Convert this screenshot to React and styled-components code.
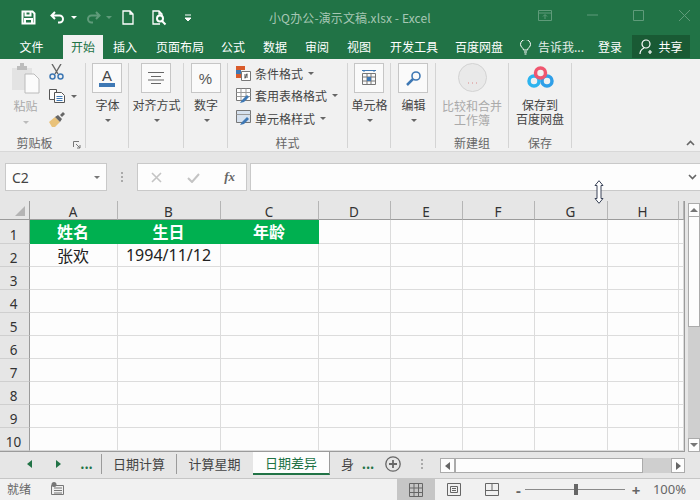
import React from 'react';
import styled, { createGlobalStyle } from 'styled-components';

const GREEN = '#217346';
const CJK = `"Noto Sans CJK SC", "Noto Sans", sans-serif`;

const GlobalStyle = createGlobalStyle`
  html, body { margin: 0; padding: 0; background: #e6e6e6; }
  * { box-sizing: border-box; }
`;

const Window = styled.div`
  position: relative;
  width: 700px;
  height: 500px;
  overflow: hidden;
  display: flex;
  flex-direction: column;
  font-family: ${CJK};
  background: #e6e6e6;
`;

/* title bar */
const TitleBar = styled.div`
  height: 35px;
  flex: none;
  display: flex;
  align-items: center;
  background: ${GREEN};
`;
const QuickBar = styled.div`
  width: 269px;
  flex: none;
  display: flex;
  align-items: center;
  height: 30px;
  padding-left: 21px;
`;
const QuickIcon = styled.svg`
  flex: none;
  margin-right: ${p => p.$gap || 0}px;
  fill: none;
  stroke: ${p => p.$dim ? '#5f9b7a' : '#fff'};
  stroke-width: ${p => p.$weight || 1.6};
`;
const Caret = styled.span`
  flex: none;
  width: 0;
  height: 0;
  border-left: ${p => p.$size || 3}px solid transparent;
  border-right: ${p => p.$size || 3}px solid transparent;
  border-top: ${p => p.$size || 3}px solid ${p => p.$color || '#666'};
  margin-top: ${p => p.$top || 0}px;
  margin-left: ${p => p.$left || 0}px;
  margin-right: ${p => p.$right || 0}px;
`;
const UpCaret = styled(Caret)`
  transform: rotate(180deg);
`;
const Title = styled.div`
  flex: 1;
  font-size: 12px;
  color: #a6c7b4;
  white-space: nowrap;
  margin-top: -1px;
  letter-spacing: 0.12px;
`;
const WindowControls = styled.div`
  width: 162px;
  flex: none;
  display: flex;
  align-items: center;
  justify-content: space-between;
  padding-right: 10px;
  margin-top: -5px;
`;

/* tab row */
const TabRow = styled.div`
  height: 24px;
  flex: none;
  display: flex;
  background: ${GREEN};
`;
const Tab = styled.div`
  flex: none;
  width: ${p => p.$w}px;
  display: flex;
  align-items: center;
  justify-content: center;
  font-size: 12px;
  line-height: 24px;
  white-space: nowrap;
  color: ${p => p.$active ? GREEN : '#fff'};
  background: ${p => p.$active ? '#f1f1f1' : 'transparent'};
`;
const TellTab = styled(Tab)`
  justify-content: flex-start;
  gap: 7px;
  padding-left: 9px;
  color: #e4eee8;
`;
const ShareButton = styled.div`
  flex: none;
  width: 58px;
  height: 23px;
  display: flex;
  align-items: center;
  justify-content: center;
  gap: 3px;
  font-size: 12px;
  color: #fff;
  background: #195a34;
`;

/* ribbon */
const Ribbon = styled.div`
  position: relative;
  height: 93px;
  flex: none;
  display: flex;
  padding-top: 4px;
  background: #f1f1f1;
  border-bottom: 1px solid #d8d8d8;
`;
const Group = styled.div`
  flex: none;
  width: ${p => p.$w}px;
  height: 85px;
  display: flex;
  flex-direction: column;
  border-right: 1px solid #d4d4d4;
`;
const GroupBody = styled.div`
  flex: 1;
  display: flex;
  flex-direction: ${p => p.$row ? 'row' : 'column'};
  align-items: ${p => p.$row ? 'flex-start' : 'center'};
  min-height: 0;
`;
const GroupLabel = styled.div`
  position: relative;
  height: 14px;
  margin-bottom: -2px;
  padding-right: ${p => p.$shift || 0}px;
  flex: none;
  font-size: 12px;
  line-height: 14px;
  color: #666;
  text-align: center;
`;
const BoxButton = styled.div`
  width: 30px;
  height: 30px;
  flex: none;
  display: flex;
  align-items: center;
  justify-content: center;
  font-family: "Liberation Sans", sans-serif;
  font-size: 15px;
  color: #555;
  background: #fafafa;
  border: 1px solid #c6c6c6;
`;
const CollapsedLabel = styled.div`
  margin: 3px 0 0 1px;
  font-size: 12px;
  line-height: 18px;
  color: #444;
  white-space: nowrap;
`;
const BigLabel = styled.div`
  margin-top: ${p => p.$top || 0}px;
  font-size: 12px;
  line-height: 14px;
  text-align: center;
  white-space: nowrap;
  color: ${p => p.$off ? '#aaa' : '#444'};
`;
const PasteLabel = styled(BigLabel)`
  line-height: 18px;
  margin-top: 3px;
`;
const PasteColumn = styled.div`
  width: 46px;
  flex: none;
  display: flex;
  flex-direction: column;
  align-items: center;
  padding-left: 5px;
`;
const ToolColumn = styled.div`
  display: flex;
  flex-direction: column;
  align-items: flex-start;
  padding: 1px 0 0 3px;
  gap: 9px;
`;
const ToolRow = styled.div`
  display: flex;
  align-items: center;
`;
const StyleList = styled.div`
  align-self: flex-start;
  display: flex;
  flex-direction: column;
  padding: 0 0 0 8px;
  gap: 2px;
`;
const StyleRow = styled.div`
  display: flex;
  align-items: center;
  height: 20.5px;
  font-size: 12px;
  color: #444;
  white-space: nowrap;
`;
const StyleName = styled.span`
  margin-left: 4px;
`;
const Launcher = styled.svg`
  position: absolute;
  right: 4px;
  top: 5px;
`;
const CollapseRibbon = styled.svg`
  position: absolute;
  right: 5px;
  bottom: 5px;
`;
const DisabledBadge = styled.svg`
  flex: none;
`;
const CloudLogo = styled.svg`
  flex: none;
  margin: 3px 0 8px;
`;

/* formula bar */
const FormulaBar = styled.div`
  height: 49px;
  flex: none;
  display: flex;
  align-items: flex-start;
  padding: 11px 0 0 5px;
`;
const NameBox = styled.div`
  width: 102px;
  height: 28px;
  flex: none;
  display: flex;
  align-items: center;
  justify-content: space-between;
  padding: 0 6px;
  font-family: "Noto Sans", sans-serif;
  font-size: 14px;
  color: #444;
  background: #fdfdfd;
  border: 1px solid #c9c9c9;
`;
const Grip = styled.div`
  width: 30px;
  height: 28px;
  flex: none;
  display: flex;
  align-items: center;
  justify-content: center;
`;
const FxBox = styled.div`
  width: 110px;
  height: 28px;
  flex: none;
  display: flex;
  align-items: center;
  justify-content: space-between;
  padding: 0 11px 0 13px;
  background: #fdfdfd;
  border: 1px solid #c9c9c9;
`;
const FxText = styled.i`
  font-family: "Liberation Serif", serif;
  font-size: 13px;
  font-weight: bold;
  color: #666;
`;
const FormulaInput = styled.div`
  flex: 1;
  height: 28px;
  margin-left: 3px;
  display: flex;
  align-items: center;
  justify-content: flex-end;
  padding-right: 3px;
  background: #fdfdfd;
  border: 1px solid #c9c9c9;
  border-right: none;
`;

/* sheet */
const SheetArea = styled.div`
  height: 251px;
  flex: none;
  display: flex;
`;
const Sheet = styled.div`
  width: 685px;
  flex: none;
  display: grid;
  grid-template-columns: 30px 88px 103px 98px 72px 72px 72px 73px 71px 5px;
  grid-template-rows: 19px 24px repeat(9, 23px);
  border-right: 1px solid #9b9b9b;
  border-bottom: 1px solid #9b9b9b;
  background: #fdfdfd;
`;
const Corner = styled.div`
  display: flex;
  align-items: flex-end;
  justify-content: flex-end;
  padding: 0 4px 3px 0;
  background: #e6e6e6;
  border-right: 1px solid #9b9b9b;
  border-bottom: 1px solid #9b9b9b;
`;
const ColHead = styled.div`
  display: flex;
  align-items: center;
  justify-content: center;
  font-family: "Noto Sans", sans-serif;
  font-size: 13.5px;
  line-height: 18px;
  padding: 4px 1px 0 0;
  color: #333;
  background: #e6e6e6;
  border-right: 1px solid #b5b5b5;
  border-bottom: 1px solid #9b9b9b;
`;
const RowHead = styled.div`
  display: flex;
  align-items: flex-end;
  justify-content: center;
  padding-right: 2px;
  font-family: "Noto Sans", sans-serif;
  font-size: 13.5px;
  line-height: 15px;
  color: #333;
  background: #e6e6e6;
  border-right: 1px solid #9b9b9b;
  border-bottom: 1px solid #cfcfcf;
`;
const Cell = styled.div`
  display: flex;
  align-items: center;
  justify-content: center;
  font-size: 16px;
  line-height: 22px;
  white-space: nowrap;
  padding: 0 1px 1px 0;
  color: ${p => p.$head ? '#fff' : '#222'};
  font-weight: ${p => p.$head ? 700 : 400};
  font-family: ${p => p.$num ? '"Noto Sans", sans-serif' : CJK};
  background: ${p => p.$head ? '#00b050' : 'transparent'};
  border-right: 1px solid ${p => p.$head ? '#00b050' : '#dcdcdc'};
  border-bottom: 1px solid ${p => p.$head ? '#00b050' : '#dcdcdc'};
`;
const VScroll = styled.div`
  flex: 1;
  margin: 2px 0 0 3px;
  display: flex;
  flex-direction: column;
  background: #cfcfcf;
  background-image: radial-gradient(#e2e2e2 0.6px, transparent 0.7px);
  background-size: 2px 2px;
`;
const ScrollButton = styled.div`
  flex: none;
  width: ${p => p.$w || 'auto'};
  height: ${p => p.$h || 'auto'};
  display: flex;
  align-items: center;
  justify-content: center;
  background: #fdfdfd;
  border: 1px solid #ababab;
`;
const VThumb = styled.div`
  height: 110px;
  flex: none;
  background: #fdfdfd;
  border: 1px solid #ababab;
  border-top: none;
`;
const Spacer = styled.div`
  flex: 1;
`;
const StatusGap = styled.div`
  flex: none;
  width: 14px;
`;

/* sheet tabs */
const TabsBar = styled.div`
  height: 27px;
  flex: none;
  display: flex;
  align-items: flex-start;
  background: #e6e6e6;
  border-bottom: 1px solid #c6c6c6;
`;
const NavButton = styled.div`
  width: ${p => p.$w}px;
  height: 23px;
  flex: none;
  display: flex;
  align-items: center;
  justify-content: center;
  padding-bottom: ${p => p.$lift || 0}px;
  padding-left: ${p => p.$inset || 0}px;
  padding-right: ${p => p.$outset || 0}px;
  font-size: 13px;
  font-weight: 700;
  color: ${GREEN};
`;
const SheetTab = styled.div`
  flex: none;
  width: ${p => p.$w}px;
  height: ${p => p.$active || p.$clip ? 23 : 20}px;
  display: flex;
  align-items: center;
  justify-content: ${p => p.$clip ? 'flex-start' : 'center'};
  overflow: hidden;
  font-size: 13px;
  color: ${p => p.$active ? GREEN : '#444'};
  background: ${p => p.$active ? '#fdfdfd' : 'transparent'};
  border-left: ${p => p.$first ? '1px solid #9b9b9b' : 'none'};
  border-right: 1px solid ${p => p.$active || !p.$last ? '#9b9b9b' : 'transparent'};
  border-bottom: ${p => p.$active ? `2px solid ${GREEN}` : 'none'};
  padding-left: ${p => p.$clip ? 11 : 0}px;
`;
const SheetTabGroup = styled.div`
  display: flex;
  height: 23px;
  align-items: center;
`;
const HScroll = styled.div`
  width: 245px;
  height: 15px;
  flex: none;
  margin: 6px 0 0 0;
  display: flex;
  background: #cfcfcf;
  background-image: radial-gradient(#e2e2e2 0.6px, transparent 0.7px);
  background-size: 2px 2px;
`;
const HThumb = styled.div`
  width: 188px;
  flex: none;
  background: #fdfdfd;
  border: 1px solid #ababab;
`;

/* status bar */
const StatusBar = styled.div`
  flex: 1;
  display: flex;
  align-items: stretch;
  background: #f1f1f1;
  padding-left: 7px;
  font-size: 12px;
  color: #666;
`;
const StatusText = styled.div`
  width: 44px;
  flex: none;
  line-height: 20px;
`;
const MacroIcon = styled.svg`
  flex: none;
  margin-top: 3px;
`;
const ViewButton = styled.div`
  flex: none;
  width: ${p => p.$w}px;
  display: flex;
  align-items: center;
  justify-content: center;
  background: ${p => p.$active ? '#c6c6c6' : 'transparent'};
`;
const Zoomer = styled.div`
  flex: none;
  display: flex;
  align-items: center;
  gap: 4px;
  width: 137px;
  margin-left: 5px;
`;
const ZoomTrack = styled.div`
  position: relative;
  width: 100px;
  height: 1px;
  margin-right: 3px;
  background: #8a8a8a;
`;
const ZoomKnob = styled.div`
  position: absolute;
  left: 49px;
  top: -5px;
  width: 4px;
  height: 11px;
  background: #666;
`;
const ZoomSign = styled.span`
  font-family: "Noto Sans", sans-serif;
  font-size: 15px;
  font-weight: 700;
  color: #666;
  line-height: 20px;
`;
const ZoomValue = styled.div`
  font-family: "Noto Sans", sans-serif;
  font-size: 13px;
  line-height: 20px;
  color: #666;
`;
const ResizeCursor = styled.svg`
  position: absolute;
  left: 594px;
  top: 180px;
`;

const tabs = [
  ['文件', 63], ['开始', 40, true], ['插入', 44], ['页面布局', 66], ['公式', 40], ['数据', 44],
  ['审阅', 40], ['视图', 44], ['开发工具', 66], ['百度网盘', 64],
];
const columns = [['A', 88], ['B', 103], ['C', 98], ['D', 72], ['E', 72], ['F', 72], ['G', 73], ['H', 71]];
const rows = [1, 2, 3, 4, 5, 6, 7, 8, 9, 10];

const Row = ({ r }) => {
  const values = {
    1: ['姓名', '生日', '年龄'],
    2: ['张欢', '1994/11/12', ''],
  }[r] || [];
  return (
    <>
      <RowHead>{r}</RowHead>
      {columns.map(([c], i) => (
        <Cell key={c} $head={r === 1 && i < 3} $num={r === 2 && i === 1}>{values[i]}</Cell>
      ))}
      <Cell />
    </>
  );
};

const TableIcon = ({ accent }) => (
  <svg width="15" height="16" viewBox="0 0 15 16">
    <path d="M.5.5h14v12H.5z" fill={accent ? '#d6e1ee' : '#fff'} stroke="#777" />
    {!accent && <path d="M.5 4.5h14M.5 8.5h14M5 .5v12M10 .5v12" stroke="#999" />}
    {accent && <path d="M.5 4.5h14" stroke="#999" />}
    <path d="M4 15l2-3 5-5 2 2-5 5z" fill="#3e78b4" />
  </svg>
);

const GripDots = () => (
  <svg width="2" height="10" viewBox="0 0 2 10" fill="#aaa"><path d="M0 0h2v2H0zM0 4h2v2H0zM0 8h2v2H0z" /></svg>
);

export default function App() {
  return (
    <Window>
      <GlobalStyle />
      <TitleBar>
        <QuickBar>
          <QuickIcon width="15" height="15" viewBox="0 0 15 15" $gap={14} $weight={2}>
            <path d="M1.5 1.5h10l2 2v10h-12z" />
            <path d="M4.5 2v3.5h5V2M4 13.5V9h7v4.5" />
          </QuickIcon>
          <QuickIcon width="15" height="13" viewBox="0 0 15 13" $weight={2}>
            <path d="M5 1L1.5 4.5 5 8M2 4.5h7.5a3.5 3.5 0 0 1 0 7H8" />
          </QuickIcon>
          <Caret $color="#fff" $left={6} $right={9} />
          <QuickIcon width="15" height="13" viewBox="0 0 15 13" $dim $weight={2}>
            <path d="M10 1l3.5 3.5L10 8M13 4.5H5.5a3.5 3.5 0 0 0 0 7H7" />
          </QuickIcon>
          <Caret $color="#5f9b7a" $left={5} $right={10} />
          <QuickIcon width="12" height="15" viewBox="0 0 12 15" $gap={18} $weight={1.3}>
            <path d="M1 1h7l3 3v10H1zM8 1v3h3" />
          </QuickIcon>
          <QuickIcon width="15" height="16" viewBox="0 0 15 16" $gap={18} $weight={1.3}>
            <path d="M10 6V4L7 1H1v13h7M7 1v3h3" />
            <circle cx="8" cy="8.5" r="3" strokeWidth="2" />
            <path d="M10 11l3.5 3.5" strokeWidth="2" />
          </QuickIcon>
          <svg width="6" height="8" viewBox="0 0 6 8"><path d="M0 1h6M0 4l3 3 3-3z" stroke="#fff" fill="#fff" /></svg>
        </QuickBar>
        <Title>小Q办公-演示文稿.xlsx - Excel</Title>
        <WindowControls>
          <QuickIcon width="14" height="11" viewBox="0 0 14 11" $dim $weight={1}>
            <path d="M.5.5h13v10H.5zM.5 3h13M7 9V5M5 6.5l2-2 2 2" />
          </QuickIcon>
          <QuickIcon width="11" height="2" viewBox="0 0 11 2" $dim $weight={1}><path d="M0 1h11" /></QuickIcon>
          <QuickIcon width="11" height="11" viewBox="0 0 11 11" $dim $weight={1}><path d="M.5.5h10v10H.5z" /></QuickIcon>
          <QuickIcon width="11" height="11" viewBox="0 0 11 11" $dim $weight={1}><path d="M0 0l11 11M11 0L0 11" /></QuickIcon>
        </WindowControls>
      </TitleBar>

      <TabRow>
        {tabs.map(([name, w, active]) => <Tab key={name} $w={w} $active={active}>{name}</Tab>)}
        <TellTab $w={77}>
          <svg width="11" height="15" viewBox="0 0 11 15" fill="none" stroke="#fff">
            <path d="M3.5 10c0-2-3-3-3-5.5a5 5 0 0 1 10 0c0 2.5-3 3.500-3 5.500zM4 12h3M4.500 14h2" />
          </svg>
          告诉我...
        </TellTab>
        <Tab $w={44}>登录</Tab>
        <ShareButton>
          <svg width="16" height="16" viewBox="0 0 16 16" fill="none" stroke="#fff" strokeWidth="1.2">
            <circle cx="7" cy="5" r="4" />
            <path d="M1 15c0-3 2-5 4-6M11 11v4M9 13h4" />
          </svg>
          共享
        </ShareButton>
      </TabRow>

      <Ribbon>
        <Group $w={86}>
          <GroupBody $row>
            <PasteColumn>
              <svg width="29" height="31" viewBox="0 0 29 31">
                <path d="M1 5h20v22H1z" fill="#e3e3e3" />
                <path d="M6 3h10v4H6zM9 0h4v3H9z" fill="#bdbdbd" />
                <path d="M14 11h9l5 5v14H14z" fill="#fbfbfb" stroke="#bbb" />
              </svg>
              <PasteLabel $off>粘贴</PasteLabel>
              <Caret $color="#bbb" $top={6} />
            </PasteColumn>
            <ToolColumn>
              <svg width="15" height="16" viewBox="0 0 15 16" fill="none">
                <path d="M3 0l6 10M12 0L6 10" stroke="#666" strokeWidth="1.4" />
                <circle cx="3.500" cy="12.500" r="2.500" stroke="#3e78b4" strokeWidth="1.500" />
                <circle cx="11.500" cy="12.500" r="2.500" stroke="#3e78b4" strokeWidth="1.500" />
              </svg>
              <ToolRow>
                <svg width="16" height="14" viewBox="0 0 16 14" fill="#fdfdfd" stroke="#555">
                  <path d="M.5.500h7v10h-7z" />
                  <path d="M5.500 3.500h7l3 3v7h-10z" />
                  <path d="M7.500 7.500h6M7.500 9.500h6M7.500 11.500h6" stroke="#3e78b4" />
                </svg>
                <Caret $left={6} />
              </ToolRow>
              <svg width="16" height="15" viewBox="0 0 16 15">
                <path d="M0 10l6-5 5 5-5 5H3z" fill="#e9c27a" />
                <path d="M6 5l3-2 4 4-2 3z" fill="#666" />
                <path d="M11 3l3-3 2 2-3 3z" fill="#666" />
              </svg>
            </ToolColumn>
          </GroupBody>
          <GroupLabel $shift={16}>
            剪贴板
            <Launcher width="8" height="8" viewBox="0 0 8 8" fill="none" stroke="#777">
              <path d="M.5 6V.5H6M3 3l4 4M7 4v3H4" />
            </Launcher>
          </GroupLabel>
        </Group>

        <Group $w={43}>
          <GroupBody>
            <BoxButton>
              <svg width="16" height="20" viewBox="0 0 16 20">
                <text x="8" y="13" textAnchor="middle" fontFamily="Liberation Sans" fontSize="15" fill="#444">A</text>
                <path d="M0 15h16v4H0z" fill="#3e78b4" />
              </svg>
            </BoxButton>
            <CollapsedLabel>字体</CollapsedLabel>
            <Caret $top={5} $left={2} />
          </GroupBody>
          <GroupLabel />
        </Group>

        <Group $w={55}>
          <GroupBody>
            <BoxButton>
              <svg width="16" height="12" viewBox="0 0 16 12" stroke="#666">
                <path d="M0 .5h16M3 4.500h10M0 8h16M3 11.500h10" />
              </svg>
            </BoxButton>
            <CollapsedLabel>对齐方式</CollapsedLabel>
            <Caret $top={5} $left={2} />
          </GroupBody>
          <GroupLabel />
        </Group>

        <Group $w={44}>
          <GroupBody>
            <BoxButton>%</BoxButton>
            <CollapsedLabel>数字</CollapsedLabel>
            <Caret $top={5} $left={2} />
          </GroupBody>
          <GroupLabel />
        </Group>

        <Group $w={120}>
          <GroupBody>
            <StyleList>
              <StyleRow>
                <svg width="15" height="15" viewBox="0 0 15 15">
                  <path d="M0 0h9v4H0z" fill="#d95b2b" />
                  <path d="M0 4h5v4H0z" fill="#3e78b4" />
                  <path d="M0 8h5v4H0z" fill="#d95b2b" />
                  <path d="M5.500 5.500h9v9h-9z" fill="#fff" stroke="#777" />
                  <path d="M8 9h4M8 11h4M11 7.500l-2 5" stroke="#555" fill="none" />
                </svg>
                <StyleName>条件格式</StyleName>
                <Caret $left={5} />
              </StyleRow>
              <StyleRow>
                <TableIcon />
                <StyleName>套用表格格式</StyleName>
                <Caret $left={5} />
              </StyleRow>
              <StyleRow>
                <TableIcon accent />
                <StyleName>单元格样式</StyleName>
                <Caret $left={5} />
              </StyleRow>
            </StyleList>
          </GroupBody>
          <GroupLabel>样式</GroupLabel>
        </Group>

        <Group $w={43}>
          <GroupBody>
            <BoxButton>
              <svg width="16" height="16" viewBox="0 0 16 16" fill="none" stroke="#777">
                <path d="M1 .5h14M3 0v2M13 0v2" stroke="#3e78b4" />
                <path d="M1.500 3.500h13v11h-13zM1.500 7h13M1.500 11h13M6 3.500v11M10 3.500v11" />
                <path d="M6 7h4v4H6z" fill="#3e78b4" stroke="none" />
              </svg>
            </BoxButton>
            <CollapsedLabel>单元格</CollapsedLabel>
            <Caret $top={5} $left={2} />
          </GroupBody>
          <GroupLabel />
        </Group>

        <Group $w={45}>
          <GroupBody>
            <BoxButton>
              <svg width="15" height="15" viewBox="0 0 15 15" fill="none" stroke="#3e78b4">
                <circle cx="10" cy="5" r="4" strokeWidth="1.600" />
                <path d="M7 8l-6 6" strokeWidth="2.500" />
              </svg>
            </BoxButton>
            <CollapsedLabel>编辑</CollapsedLabel>
            <Caret $top={5} $left={2} />
          </GroupBody>
          <GroupLabel />
        </Group>

        <Group $w={73}>
          <GroupBody>
            <DisabledBadge width="29" height="29" viewBox="0 0 29 29">
              <circle cx="14.500" cy="14.500" r="14" fill="#e9e9e9" stroke="#d2d2d2" />
              <path d="M10 20h1M14 20h1M18 20h1" stroke="#d88" />
            </DisabledBadge>
            <BigLabel $off $top={7}>比较和合并</BigLabel>
            <BigLabel $off>工作簿</BigLabel>
          </GroupBody>
          <GroupLabel>新建组</GroupLabel>
        </Group>

        <Group $w={63}>
          <GroupBody>
            <CloudLogo width="27" height="22" viewBox="0 0 27 22" fill="none">
              <circle cx="7" cy="15" r="5" stroke="#2db4ef" strokeWidth="3.500" />
              <circle cx="20" cy="15" r="5" stroke="#2f9fe8" strokeWidth="3.500" />
              <circle cx="13.500" cy="7" r="5" stroke="#f0566f" strokeWidth="3.500" />
            </CloudLogo>
            <BigLabel $top={2}>保存到</BigLabel>
            <BigLabel>百度网盘</BigLabel>
          </GroupBody>
          <GroupLabel>保存</GroupLabel>
        </Group>

        <CollapseRibbon width="9" height="6" viewBox="0 0 9 6" fill="none" stroke="#666" strokeWidth="1.600">
          <path d="M1 5l3.500-3.500L8 5" />
        </CollapseRibbon>
      </Ribbon>

      <FormulaBar>
        <NameBox>C2<Caret $size={3.500} $color="#777" /></NameBox>
        <Grip><GripDots /></Grip>
        <FxBox>
          <svg width="11" height="11" viewBox="0 0 11 11" fill="none" stroke="#c4c4c4" strokeWidth="1.600"><path d="M1 1l9 9M10 1l-9 9" /></svg>
          <svg width="13" height="11" viewBox="0 0 13 11" fill="none" stroke="#c4c4c4" strokeWidth="2"><path d="M1 6l4 4 7-8" /></svg>
          <FxText>fx</FxText>
        </FxBox>
        <FormulaInput>
          <svg width="9" height="6" viewBox="0 0 9 6" fill="none" stroke="#666" strokeWidth="1.600"><path d="M1 1l3.500 3.500L8 1" /></svg>
        </FormulaInput>
      </FormulaBar>

      <SheetArea>
        <Sheet>
          <Corner>
            <svg width="10" height="10" viewBox="0 0 10 10"><path d="M10 0v10H0z" fill="#b4b4b4" /></svg>
          </Corner>
          {columns.map(([c]) => <ColHead key={c}>{c}</ColHead>)}
          <ColHead />
          {rows.map(r => <Row key={r} r={r} />)}
        </Sheet>
        <VScroll>
          <ScrollButton $h="14px">
            <UpCaret $size={4} $color="#777" />
          </ScrollButton>
          <VThumb />
          <Spacer />
          <ScrollButton $h="14px">
            <Caret $size={4} $color="#777" />
          </ScrollButton>
        </VScroll>
      </SheetArea>

      <TabsBar>
        <NavButton $w={44} $inset={14}>
          <svg width="5" height="8" viewBox="0 0 5 8" fill={GREEN}><path d="M5 0v8L0 4z" /></svg>
        </NavButton>
        <NavButton $w={28}>
          <svg width="5" height="8" viewBox="0 0 5 8" fill={GREEN}><path d="M0 0v8l5-4z" /></svg>
        </NavButton>
        <NavButton $w={29} $lift={1}>...</NavButton>
        <SheetTabGroup>
          <SheetTab $w={76} $first>日期计算</SheetTab>
          <SheetTab $w={76} $last>计算星期</SheetTab>
          <SheetTab $w={77} $active>日期差异</SheetTab>
          <SheetTab $w={31} $clip $last>身</SheetTab>
        </SheetTabGroup>
        <NavButton $w={14} $lift={1}>...</NavButton>
        <NavButton $w={36}>
          <svg width="16" height="16" viewBox="0 0 16 16" fill="none" stroke="#666" strokeWidth="1.300">
            <circle cx="8" cy="8" r="7.200" />
            <path d="M8 4v8M4 8h8" strokeWidth="1.800" />
          </svg>
        </NavButton>
        <NavButton $w={29} $outset={7}><GripDots /></NavButton>
        <HScroll>
          <ScrollButton $w="15px"><svg width="5" height="8" viewBox="0 0 5 8" fill="#666"><path d="M5 0v8L0 4z" /></svg></ScrollButton>
          <HThumb />
          <Spacer />
          <ScrollButton $w="14px"><svg width="5" height="8" viewBox="0 0 5 8" fill="#666"><path d="M0 0v8l5-4z" /></svg></ScrollButton>
        </HScroll>
      </TabsBar>

      <StatusBar>
        <StatusText>就绪</StatusText>
        <MacroIcon width="13" height="13" viewBox="0 0 13 13" fill="none" stroke="#777">
          <path d="M.5 3.500h12v9H.5zM3 6h8M3 8.500h8M3 11h8" />
          <circle cx="3" cy="2.500" r="2.500" fill="#777" stroke="none" />
        </MacroIcon>
        <Spacer />
        <ViewButton $w={38} $active>
          <svg width="14" height="14" viewBox="0 0 14 14" fill="none" stroke="#666"><path d="M.5.500h13v13H.5zM.5 5h13M.5 9.500h13M5 .5v13M9.500 .5v13" /></svg>
        </ViewButton>
        <ViewButton $w={38}>
          <svg width="14" height="13" viewBox="0 0 14 13" fill="none" stroke="#666"><path d="M.5.500h13v12H.5zM3.500 3.500h7v6h-7zM5 5.500h4M5 7.500h4" /></svg>
        </ViewButton>
        <ViewButton $w={38}>
          <svg width="14" height="13" viewBox="0 0 14 13" fill="none" stroke="#666"><path d="M.5.500h13v12H.5zM.5 7.500h13M7 .5v7" /></svg>
        </ViewButton>
        <Zoomer>
          <ZoomSign>-</ZoomSign>
          <ZoomTrack><ZoomKnob /></ZoomTrack>
          <ZoomSign>+</ZoomSign>
        </Zoomer>
        <ZoomValue>100%</ZoomValue>
        <StatusGap />
      </StatusBar>

      <ResizeCursor width="10" height="24" viewBox="0 0 10 24" fill="#fff" stroke="#3a4358">
        <path d="M5 .7L9 5.500H7v13h2L5 23.300 1 18.500h2v-13H1z" />
      </ResizeCursor>
    </Window>
  );
}
